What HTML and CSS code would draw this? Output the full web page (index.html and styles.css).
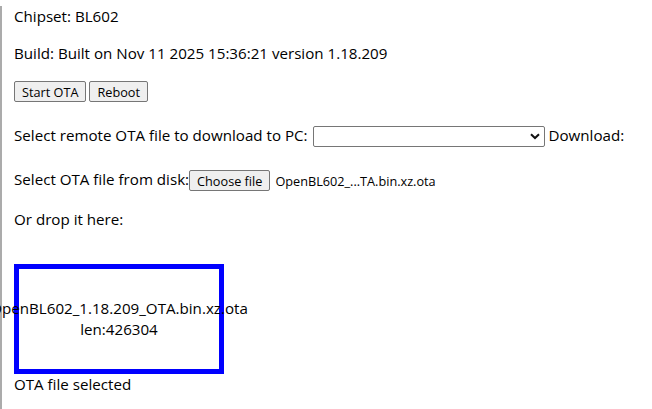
FILE: index.html
```html
<!DOCTYPE html>
<html>
<head>
<meta charset="utf-8">
<link rel="stylesheet" href="styles.css">
</head>
<body>
<div class="page">
  <p class="line">Chipset: BL602</p>
  <p class="line">Build: Built on Nov 11 2025 15:36:21 version 1.18.209</p>
  <div class="buttons"><button class="btn">Start OTA</button> <button class="btn">Reboot</button></div>
  <p class="line line-select">Select remote OTA file to download to PC: <span class="select"><svg class="chev" width="10" height="7" viewBox="0 0 10 7"><path d="M1 1.2 L5 5 L9 1.2" fill="none" stroke="#111" stroke-width="2"/></svg></span> Download:</p>
  <p class="line line-file">Select OTA file from disk:<span class="file"><button class="btn">Choose file</button><span class="fname">OpenBL602_...TA.bin.xz.ota</span></span></p>
  <p class="line">Or drop it here:</p>
  <div class="drop">
    <div class="droptext">OpenBL602_1.18.209_OTA.bin.xz.ota<br>len:426304</div>
  </div>
  <div class="status">OTA file selected</div>
</div>
</body>
</html>
```

FILE: styles.css
```css
html, body {
  margin: 0;
  padding: 0;
  background: #fff;
}
body {
  font-family: "Open Sans", "Noto Sans", sans-serif;
  font-size: 15.15px;
  color: #000;
}
.page {
  border-left: 2px solid #ababab;
  padding: 0 0 0 12px;
  min-height: 419px;
  box-sizing: border-box;
  margin-top: -10px;
}
.line {
  margin: 16px 0;
  line-height: 21px;
  white-space: nowrap;
}
.line-select {
  line-height: 32px;
}
.line-file {
  line-height: 24px;
}
.buttons {
  margin: 16px 0;
  height: 23px;
  display: flex;
  gap: 3px;
  align-items: flex-start;
  padding-top: 1px;
  box-sizing: border-box;
}
.btn {
  font-family: "Open Sans", "Noto Sans", sans-serif;
  font-size: 12.7px;
  line-height: 16px;
  background: #efefef;
  border: 1px solid #767676;
  border-radius: 2px;
  padding: 1px 7px;
  height: 21px;
  color: #000;
  margin: 0;
}
.select {
  display: inline-flex;
  align-items: center;
  justify-content: flex-end;
  vertical-align: middle;
  width: 232px;
  height: 21px;
  box-sizing: border-box;
  border: 1px solid #767676;
  border-radius: 2px;
  padding-right: 4px;
  margin-left: 1px;
  background: #fff;
}
.file {
  display: inline-flex;
  align-items: center;
  vertical-align: middle;
}
.fname {
  font-size: 12.7px;
  margin-left: 5px;
}
.drop {
  width: 200px;
  height: 100px;
  border: 5px solid #0000ff;
  display: flex;
  align-items: center;
  justify-content: center;
  margin-top: 34px;
}
.droptext {
  text-align: center;
  white-space: nowrap;
  line-height: 21px;
}
.status {
  line-height: 21px;
}
```
